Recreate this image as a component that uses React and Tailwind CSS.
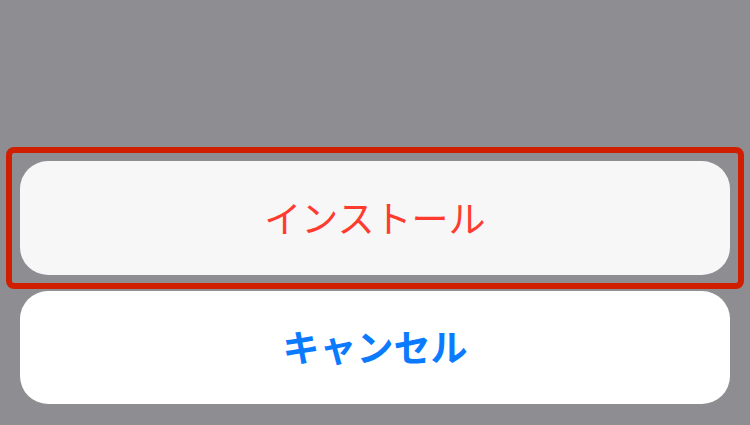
export default function App() {
  return (
    <div
      className="w-[750px] h-[425px] bg-[#8e8d92] overflow-hidden px-[20px] pt-[161px] flex flex-col gap-[16px]"
      style={{ fontFamily: '"Noto Sans CJK JP", "Noto Sans", sans-serif' }}
    >
      <div className="relative">
        <div className="h-[114px] rounded-[28px] bg-[#f7f7f7] flex items-center justify-center">
          <span className="text-[37px] leading-none text-[#ff3b30] -mt-[2px]">インストール</span>
        </div>
        <div className="absolute -left-[14px] -right-[14px] -top-[14px] -bottom-[14px] border-[6px] border-[#d01f00] rounded-[8px] pointer-events-none" />
      </div>
      <div className="h-[113px] rounded-[28px] bg-white flex items-center justify-center">
        <span className="text-[37px] leading-none font-bold text-[#0a7aff] -mt-[2px]">キャンセル</span>
      </div>
    </div>
  );
}
